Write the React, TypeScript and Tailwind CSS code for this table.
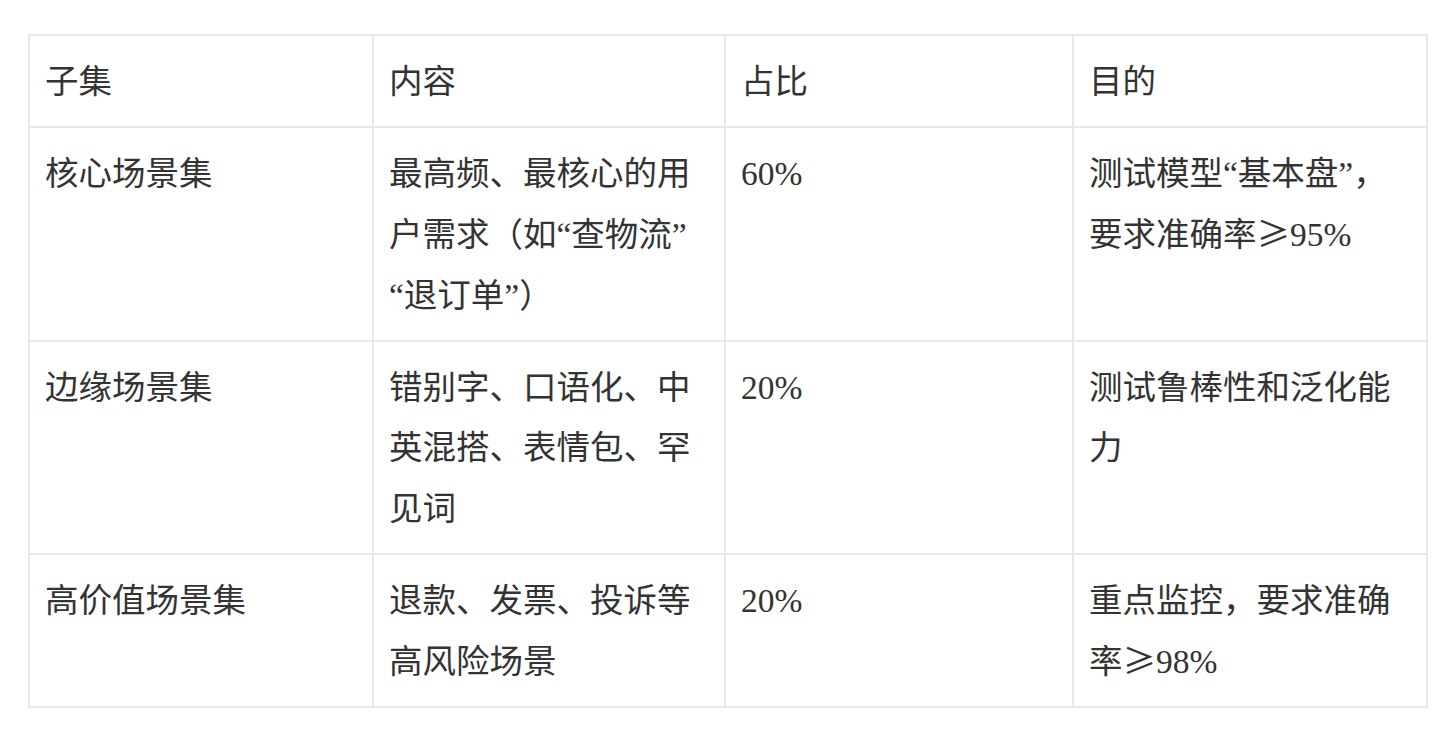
// Dataset split table: subsets, content, share and purpose.

import type { ReactNode } from "react";

// ≥ drawn from the CJK face so it gets the full-width advance
const Ge = () => (
  <span className="leading-none" style={{ fontFamily: '"Noto Sans CJK SC", sans-serif' }}>
    ≥
  </span>
);

const rows: { name: string; content: ReactNode; ratio: string; goal: ReactNode }[] = [
  {
    name: "核心场景集",
    content: (
      <>
        最高频、最核心的用户需求（如“查物流”
        <wbr />
        “退订单”）
      </>
    ),
    ratio: "60%",
    goal: (
      <>
        测试模型“基本盘”，要求准确率
        <Ge />
        95%
      </>
    ),
  },
  {
    name: "边缘场景集",
    content: "错别字、口语化、中英混搭、表情包、罕见词",
    ratio: "20%",
    goal: "测试鲁棒性和泛化能力",
  },
  {
    name: "高价值场景集",
    content: "退款、发票、投诉等高风险场景",
    ratio: "20%",
    goal: (
      <>
        重点监控，要求准确率
        <Ge />
        98%
      </>
    ),
  },
];

const cell =
  "border-2 border-[#e8e8e8] px-[15px] pt-[16px] pb-[13.25px] align-top text-left font-normal";

export default function App() {
  return (
    <div className="min-h-[738px] bg-white pt-[34px] pl-[28px]">
      <table
        className="w-[1400px] table-fixed border-collapse text-[33.5px] leading-[60.75px] text-[#333333]"
        style={{ fontFamily: '"Liberation Serif", "Noto Sans CJK SC", serif' }}
      >
        <colgroup>
          <col className="w-[344px]" />
          <col className="w-[352px]" />
          <col className="w-[348px]" />
          <col className="w-[354px]" />
        </colgroup>
        <thead>
          <tr>
            <th className={cell}>子集</th>
            <th className={cell}>内容</th>
            <th className={cell}>占比</th>
            <th className={cell}>目的</th>
          </tr>
        </thead>
        <tbody>
          {rows.map((r) => (
            <tr key={r.name}>
              <td className={cell}>{r.name}</td>
              <td className={cell}>{r.content}</td>
              <td className={cell}>{r.ratio}</td>
              <td className={cell}>{r.goal}</td>
            </tr>
          ))}
        </tbody>
      </table>
    </div>
  );
}
